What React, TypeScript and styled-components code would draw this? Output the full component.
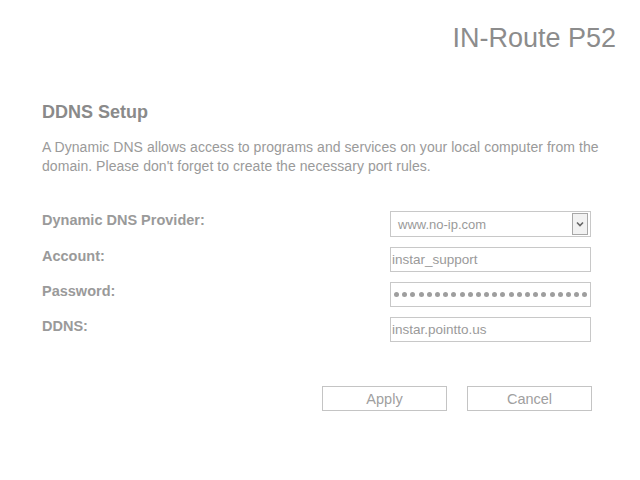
import React from "react";
import styled, { createGlobalStyle } from "styled-components";

const Global = createGlobalStyle`
  html, body { margin: 0; padding: 0; background: #fff; }
  body { font-family: "Liberation Sans", Arial, sans-serif; }
`;

const Page = styled.div`
  width: 640px;
  height: 480px;
  display: flex;
  flex-direction: column;
`;

const Header = styled.header`
  display: flex;
  justify-content: flex-end;
  padding: 23px 24px 0 0;
  height: 39px;
`;

const Brand = styled.h1`
  margin: 0;
  font-size: 27px;
  font-weight: normal;
  color: #8c8c8c;
  line-height: 30px;
`;

const Main = styled.main`
  padding: 40px 0 0 42px;
  width: 558px;
`;

const Heading = styled.h2`
  margin: 0;
  font-size: 18px;
  font-weight: bold;
  color: #8a8a8a;
  line-height: 20px;
`;

const Intro = styled.p`
  margin: 16px 0 0;
  font-size: 14px;
  line-height: 19px;
  color: #9a9a9a;
  letter-spacing: 0.05px;
`;

const Form = styled.form`
  margin-top: 35px;
  display: flex;
  flex-direction: column;
  gap: 10px;
  width: 549px;
`;

const Row = styled.div`
  display: flex;
  align-items: flex-start;
  justify-content: space-between;
`;

const Label = styled.label`
  margin-top: 1px;
  font-size: 14.5px;
  line-height: 17px;
  font-weight: bold;
  color: #9a9a9a;
`;

const Box = styled.div<{ $tall?: boolean }>`
  box-sizing: border-box;
  width: 201px;
  height: ${(p) => (p.$tall ? 26 : 25)}px;
  border: 1px solid #c8c8c8;
  display: flex;
  align-items: center;
  font-size: 13.5px;
  color: #9a9a9a;
  background: #fff;
`;

const Field = styled.input`
  box-sizing: border-box;
  width: 201px;
  height: 25px;
  border: 1px solid #c8c8c8;
  padding: 0 1px;
  font-family: "Liberation Sans", Arial, sans-serif;
  font-size: 13.5px;
  color: #9a9a9a;
  outline: none;
  background: #fff;
`;

const DotsBox = styled(Box)`
  padding: 0 2px 0 3px;
  gap: 3.2px;
`;

const Dot = styled.span`
  width: 5px;
  height: 5px;
  border-radius: 50%;
  background: #9e9e9e;
  flex: none;
`;

const SelectBox = styled(Box)`
  justify-content: space-between;
  padding: 0 2px 0 7px;
  font-size: 13px;
`;

const Arrow = styled.span`
  box-sizing: border-box;
  width: 16px;
  height: 22px;
  border: 1px solid #a8a8a8;
  background: #f2f2f2;
  display: flex;
  align-items: center;
  justify-content: center;
`;

const Actions = styled.div`
  margin-top: 44px;
  display: flex;
  justify-content: flex-end;
  gap: 20px;
  width: 550px;
`;

const Button = styled.button`
  box-sizing: border-box;
  width: 125px;
  height: 25px;
  background: #fff;
  border: 1px solid #c4c4c4;
  font-family: "Liberation Sans", Arial, sans-serif;
  font-size: 14.5px;
  color: #a0a0a0;
  padding: 0;
`;

export default function App() {
  return (
    <Page>
      <Global />
      <Header>
        <Brand>IN-Route P52</Brand>
      </Header>
      <Main>
        <Heading>DDNS Setup</Heading>
        <Intro>
          A Dynamic DNS allows access to programs and services on your local computer from the
          domain. Please don't forget to create the necessary port rules.
        </Intro>
        <Form>
          <Row>
            <Label>Dynamic DNS Provider:</Label>
            <SelectBox $tall>
              <span>www.no-ip.com</span>
              <Arrow>
                <svg width="8" height="6" viewBox="0 0 8 6">
                  <path d="M1 1.5 L4 4.5 L7 1.5" fill="none" stroke="#666" strokeWidth="1.6" />
                </svg>
              </Arrow>
            </SelectBox>
          </Row>
          <Row>
            <Label>Account:</Label>
            <Field defaultValue="instar_support" />
          </Row>
          <Row>
            <Label>Password:</Label>
            <DotsBox aria-label="password">
              {Array.from({ length: 24 }, (_, i) => (
                <Dot key={i} />
              ))}
            </DotsBox>
          </Row>
          <Row>
            <Label>DDNS:</Label>
            <Field defaultValue="instar.pointto.us" />
          </Row>
        </Form>
        <Actions>
          <Button type="button">Apply</Button>
          <Button type="button">Cancel</Button>
        </Actions>
      </Main>
    </Page>
  );
}
